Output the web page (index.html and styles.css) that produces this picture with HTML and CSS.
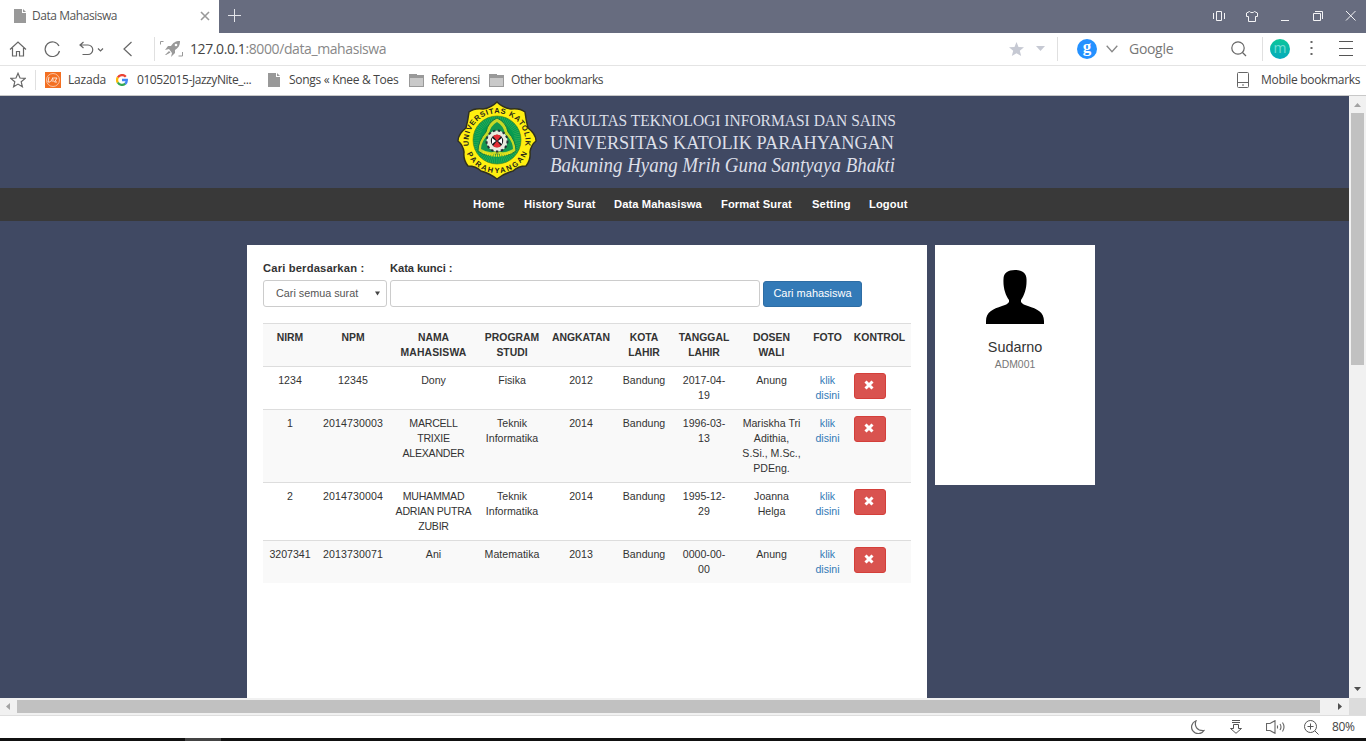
FILE: index.html
```html
<!DOCTYPE html>
<html lang="id">
<head>
<meta charset="utf-8">
<title>Data Mahasiswa</title>
<link rel="stylesheet" href="styles.css">
</head>
<body>
<div class="browser">
  <div class="titlebar">
    <div class="tab">
      <svg width="12" height="14" viewBox="0 0 12 14"><path d="M0 0h8v4h4v10H0z" fill="#999"/><path d="M9 0l3 3H9z" fill="#999"/></svg>
      <span class="tab-title">Data Mahasiswa</span>
      <svg width="10" height="10" viewBox="0 0 10 10"><path d="M1 1l8 8M9 1L1 9" stroke="#999" stroke-width="1.6"/></svg>
    </div>
    <svg class="plus" width="13" height="13" viewBox="0 0 13 13"><path d="M6.5 0v13M0 6.5h13" stroke="#e4e5ea"/></svg>
    <div class="window-buttons">
      <svg width="13" height="12" viewBox="0 0 13 12" fill="none" stroke="#f4f4f6"><path d="M.5 3v6M11.500 3v6M3.500 1.500h5v9h-5z"/></svg>
      <svg width="13" height="12" viewBox="0 0 13 12" fill="none" stroke="#f4f4f6"><path d="M3.500 1.500L.5 3v3.500h2v5h7v-5h2V3L8.500 1.500C7.500 3 4.500 3 3.500 1.500z"/></svg>
      <svg width="13" height="12" viewBox="0 0 13 12"><path d="M2 10.500h8" stroke="#f4f4f6"/></svg>
      <svg width="13" height="12" viewBox="0 0 13 12" fill="none" stroke="#f4f4f6"><path d="M1.500 3.500h7v7h-7zM3 1.500h7.500V9"/></svg>
      <svg width="13" height="12" viewBox="0 0 13 12"><path d="M1 1l9.500 9.500M10.500 1L1 10.500" stroke="#f4f4f6"/></svg>
    </div>
  </div>

  <div class="toolbar">
    <svg width="18" height="16" viewBox="0 0 18 16" fill="none" stroke="#666" stroke-width="1.200"><path d="M1 8.500L9 1l8 7.500M3.500 7v8h4v-4.500h3V15h4V7"/></svg>
    <svg width="17" height="16" viewBox="0 0 17 16" fill="none" stroke="#666" stroke-width="1.200"><path d="M15.500 10A7.300 7.300 0 1 1 15 5"/></svg>
    <svg width="26" height="16" viewBox="0 0 26 16" fill="none" stroke="#666" stroke-width="1.200"><path d="M4.500 1L1 4l3.500 3M1 4h8a4.700 4.700 0 0 1 0 9.500H3.500"/><path d="M19 7.500l2.500 2.500L24 7.500"/></svg>
    <svg width="10" height="16" viewBox="0 0 10 16" fill="none" stroke="#666" stroke-width="1.200"><path d="M8.500 1L1 8l7.500 7"/></svg>
    <i class="divider"></i>
    <svg width="24" height="16" viewBox="0 0 24 16"><path d="M.500 3.500v-3h3M22.500 11v4h-4" fill="none" stroke="#999"/><path d="M20 0c-5 0-7 2-9 5L8 5 5 9l4-1 3 4-1 4 4-4V9c3-2 5-4 5-9zM5 14l4-4 1.500 1.500L6 14z" fill="#999"/><circle cx="16" cy="4" r="1.300" fill="#fff"/></svg>
    <span class="url"><b>127.0.0.1</b>:8000/data_mahasiswa</span>
    <svg width="15" height="14" viewBox="0 0 15 14"><path d="M7.500 0l2 5 5.500.3-4.200 3.500L12.200 14 7.500 11.200 2.800 14l1.400-5.200L0 5.300 5.500 5z" fill="#c6c9d3"/></svg>
    <svg width="9" height="5" viewBox="0 0 9 5"><path d="M0 0h9L4.500 5z" fill="#c6c9d3"/></svg>
    <i class="divider"></i>
    <span class="engine">g</span>
    <svg width="12" height="8" viewBox="0 0 12 8" fill="none" stroke="#888" stroke-width="1.300"><path d="M.700.700L6 6.700 11.300.700"/></svg>
    <span class="search">Google</span>
    <svg width="16" height="16" viewBox="0 0 16 16" fill="none" stroke="#666" stroke-width="1.200"><circle cx="7" cy="7" r="6.200"/><path d="M11.500 11.500L15 15"/></svg>
    <i class="divider"></i>
    <span class="account">m</span>
    <svg width="3" height="15" viewBox="0 0 3 15" fill="#666"><path d="M.500 0h2v2h-2zM.500 6h2v2h-2zM.500 12h2v2h-2z"/></svg>
    <svg width="14" height="16" viewBox="0 0 14 16" stroke="#555"><path d="M0 .500h14M0 7.500h14M0 14.500h14"/></svg>
  </div>

  <div class="bookmarks">
    <svg width="16" height="16" viewBox="0 0 16 16" fill="none" stroke="#666" stroke-width="1.200"><path d="M8 1.300l2 4.700 5.200.4-4 3.400 1.200 5L8 12.100l-4.400 2.700 1.200-5-4-3.400L6 6z"/></svg>
    <i class="divider"></i>
    <svg width="16" height="16" viewBox="0 0 16 16"><path d="M0 0h16v16H0z" fill="#f36f21"/><g fill="none" stroke="#fff" stroke-width=".8"><circle cx="8" cy="8" r="6.500" opacity=".7"/><path d="M4 5L3 10h2M5.500 10L8 5.500V10M9 6h3L9.500 10H12"/></g></svg>
    <span class="loose">Lazada</span>
    <svg width="12" height="12" viewBox="0 0 12 12" fill="none" stroke-width="2.300"><path d="M9.800 2.700A5 5 0 0 0 1.800 3.500" stroke="#ea4335"/><path d="M1.800 3.400a5 5 0 0 0 0 5.200" stroke="#fbbc05"/><path d="M1.800 8.500a5 5 0 0 0 7.500 1.200" stroke="#34a853"/><path d="M9.200 9.800A5 5 0 0 0 10.800 6H6" stroke="#4285f4"/></svg>
    <span class="tight">01052015-JazzyNite_...</span>
    <svg width="12" height="14" viewBox="0 0 12 14"><path d="M0 0h8v4h4v10H0z" fill="#999"/><path d="M9 0l3 3H9z" fill="#999"/></svg>
    <span>Songs « Knee &amp; Toes</span>
    <svg width="15" height="13" viewBox="0 0 15 13"><path d="M0 0h8v1h7v12H0z" fill="#999"/><path d="M1 4h13v8H1z" fill="#c9c9c9"/></svg>
    <span class="tight">Referensi</span>
    <svg width="15" height="13" viewBox="0 0 15 13"><path d="M0 0h8v1h7v12H0z" fill="#999"/><path d="M1 4h13v8H1z" fill="#c9c9c9"/></svg>
    <span class="tight">Other bookmarks</span>
    <svg width="12" height="16" viewBox="0 0 12 16" fill="none" stroke="#666"><rect x=".5" y=".5" width="11" height="15" rx="1"/><path d="M1 10.500h10M5 13h2"/></svg>
    <span>Mobile bookmarks</span>
  </div>

  <div class="viewport">
    <div class="page">
      <header class="banner">
        <svg width="460" height="86" viewBox="0 0 460 86">
          <defs>
            <path id="arc-top" d="M12 47A28.500 28.500 0 1 1 68 47"/>
            <path id="arc-bottom" d="M7 40A33 33 0 0 0 73 40"/>
          </defs>
          <path d="M40 2Q46 8 54 9Q63 8 68 12Q69 20 71 28Q79 34 79 41Q74 45 73 52Q74 60 69 66Q61 66 56 71Q48 73 40 79Q32 73 24 71Q19 66 11 66Q6 60 7 52Q6 45 1 41Q1 34 9 28Q11 20 12 12Q17 8 26 9Q34 8 40 2z" fill="#ffef10" stroke="#30301f" stroke-width="1.500"/>
          <circle cx="40" cy="40" r="24" fill="#069b50" stroke="#4a7a20" stroke-width=".6"/>
          <circle cx="40" cy="40" r="20.500" fill="none" stroke="#38ad58" stroke-width="6" stroke-dasharray=".6 1.200"/>
          <path d="M40 18Q49 22 51 32Q59 41 59 51Q50 58 40 54Q30 58 21 51Q21 41 29 32Q31 22 40 18z" fill="#c5d927" stroke="#14783f"/>
          <path d="M40 22Q47 26 48 34Q56 41 56 49Q48 54 40 51Q32 54 24 49Q24 41 32 34Q33 26 40 22z" fill="#139750"/>
          <path d="M26 52Q40 59 54 52" fill="none" stroke="#f0e516" stroke-width="2.500" stroke-dasharray="1.500 .7"/>
          <circle cx="40" cy="41" r="10.500" fill="#e8eadf" stroke="#25353a" stroke-width="2" stroke-dasharray="2.500 2.500"/>
          <circle cx="40" cy="41" r="6.200" fill="#171b20"/>
          <path d="M36 36q4-3 8 0l-4 5zM36 46q4 3 8 0l-4-5z" fill="#e32c35"/>
          <path d="M35 38l4 3-4 3zM45 38l-4 3 4 3z" fill="#fff"/>
          <text class="seal"><textPath href="#arc-top" startOffset="1" textLength="98" lengthAdjust="spacing">UNIVERSITAS KATOLIK</textPath></text>
          <text class="seal"><textPath href="#arc-bottom" startOffset="14" textLength="76" lengthAdjust="spacing">PARAHYANGAN</textPath></text>
          <text class="caps" x="93" y="25.500" font-size="16.500" textLength="346" lengthAdjust="spacingAndGlyphs">FAKULTAS TEKNOLOGI INFORMASI DAN SAINS</text>
          <text class="caps" x="93" y="49" font-size="19.500" textLength="344" lengthAdjust="spacingAndGlyphs">UNIVERSITAS KATOLIK PARAHYANGAN</text>
          <text class="motto" x="93" y="72" font-size="22" textLength="345" lengthAdjust="spacingAndGlyphs">Bakuning Hyang Mrih Guna Santyaya Bhakti</text>
        </svg>
      </header>
      <nav class="menu"><a>Home</a><a>History Surat</a><a>Data Mahasiswa</a><a>Format Surat</a><a>Setting</a><a>Logout</a></nav>
      <main class="content">
        <section class="panel">
          <div class="filter">
            <label class="first">Cari berdasarkan :</label><label class="second">Kata kunci :</label>
            <div class="select"><span>Cari semua surat</span><svg width="5" height="5" viewBox="0 0 5 5"><path d="M0 .5h5L2.500 4.500z" fill="#444"/></svg></div>
            <div class="field"></div>
            <div class="button">Cari mahasiswa</div>
          </div>
          <table class="students">
            <colgroup><col class="c1"><col class="c2"><col class="c3"><col class="c4"><col class="c5"><col class="c6"><col class="c7"><col class="c8"><col class="c9"><col class="c10"></colgroup>
            <tr><th>NIRM</th><th>NPM</th><th>NAMA<br><span class="wide">MAHASISWA</span></th><th>PROGRAM<br>STUDI</th><th>ANGKATAN</th><th>KOTA<br>LAHIR</th><th>TANGGAL<br>LAHIR</th><th>DOSEN<br>WALI</th><th>FOTO</th><th>KONTROL</th></tr>
            <tr class="short"><td>1234</td><td class="npm">12345</td><td>Dony</td><td>Fisika</td><td>2012</td><td>Bandung</td><td>2017-04-<br>19</td><td>Anung</td><td><a>klik<br>disini</a></td><td class="control"><span class="delete"><svg width="10" height="10" viewBox="0 0 10 10"><path d="M1.500 1.500l7 7M8.500 1.500l-7 7" stroke="#fff" stroke-width="3"/></svg></span></td></tr>
            <tr class="tall"><td>1</td><td class="npm">2014730003</td><td class="upper">MARCELL<br>TRIXIE<br>ALEXANDER</td><td>Teknik<br>Informatika</td><td>2014</td><td>Bandung</td><td>1996-03-<br>13</td><td>Mariskha Tri<br>Adithia,<br>S.Si., M.Sc.,<br>PDEng.</td><td><a>klik<br>disini</a></td><td class="control"><span class="delete"><svg width="10" height="10" viewBox="0 0 10 10"><path d="M1.500 1.500l7 7M8.500 1.500l-7 7" stroke="#fff" stroke-width="3"/></svg></span></td></tr>
            <tr class="medium"><td>2</td><td class="npm">2014730004</td><td class="upper">MUHAMMAD<br>ADRIAN PUTRA<br>ZUBIR</td><td>Teknik<br>Informatika</td><td>2014</td><td>Bandung</td><td>1995-12-<br>29</td><td>Joanna<br>Helga</td><td><a>klik<br>disini</a></td><td class="control"><span class="delete"><svg width="10" height="10" viewBox="0 0 10 10"><path d="M1.500 1.500l7 7M8.500 1.500l-7 7" stroke="#fff" stroke-width="3"/></svg></span></td></tr>
            <tr class="short"><td>3207341</td><td class="npm">2013730071</td><td>Ani</td><td>Matematika</td><td>2013</td><td>Bandung</td><td>0000-00-<br>00</td><td>Anung</td><td><a>klik<br>disini</a></td><td class="control"><span class="delete"><svg width="10" height="10" viewBox="0 0 10 10"><path d="M1.500 1.500l7 7M8.500 1.500l-7 7" stroke="#fff" stroke-width="3"/></svg></span></td></tr>
          </table>
        </section>
        <aside class="profile">
          <svg width="58" height="54" viewBox="0 0 58 54"><path d="M17.500 9C17.500 3 22 0 29 0s11.500 3 11.500 9c.4 9-2 16-5.500 21v2c1 2 4 3 7 4 9 3 16 6 16 15v3H0v-3c0-9 7-12 16-15 3-1 6-2 7-4v-2c-3.500-5-6-12-5.500-21z"/></svg>
          <div class="name">Sudarno</div>
          <div class="id">ADM001</div>
        </aside>
      </main>
    </div>
    <div class="vscroll">
      <svg width="17" height="17" viewBox="0 0 17 17"><path d="M5 11l3.500-4 3.500 4z" fill="#a3a3a3"/></svg>
      <i class="vthumb"></i>
      <svg width="17" height="17" viewBox="0 0 17 17"><path d="M5 6h7l-3.500 4z" fill="#505050"/></svg>
    </div>
  </div>
  <div class="hscroll">
    <svg width="17" height="17" viewBox="0 0 17 17"><path d="M10 5v7L6 8.500z" fill="#a3a3a3"/></svg>
    <i class="hthumb"></i>
    <svg width="17" height="17" viewBox="0 0 17 17"><path d="M6 5v7l4-3.500z" fill="#505050"/></svg>
    <i class="corner"></i>
  </div>
  <div class="status">
    <svg width="14" height="14" viewBox="0 0 14 14" fill="none" stroke="#666" stroke-width="1.200"><path d="M5 .700C3 6 6 11 13 10.500A6.700 6.700 0 1 1 5 .700z"/></svg>
    <svg width="13" height="14" viewBox="0 0 13 14" fill="none" stroke="#555"><path d="M2 .5h8M2 2.500h8M3.500 8.500v-4h5v4H11.500L6 13.300.5 8.500z"/></svg>
    <svg width="19" height="14" viewBox="0 0 19 14" fill="none" stroke="#666" stroke-width="1.100"><path d="M.500 3.500H4L9 .700v12.600L4 10.500H.500zM11.500 5.500v3M14 4q2 3 0 6M16.500 2.500q3 4.500 0 9"/></svg>
    <svg width="15" height="15" viewBox="0 0 15 15" fill="none" stroke="#555"><circle cx="6.500" cy="6.500" r="6"/><path d="M3.500 6.500h6M6.500 3.500v6M11 11l3.500 3.500"/></svg>
    <span>80%</span>
  </div>
  <div class="taskbar"><i></i></div>
</div>
</body>
</html>
```
FILE: styles.css
```css
* { box-sizing: border-box; }
body { margin: 0; overflow: hidden; }
svg { display: block; flex: none; }
.browser { width: 1366px; height: 741px; display: flex; flex-direction: column; background: #fff; font-family: "Open Sans", "Noto Sans", sans-serif; font-size: 12px; color: #444; white-space: nowrap; }
.titlebar { height: 33px; background: #676c7f; display: flex; align-items: center; }
.tab { width: 219px; height: 33px; background: #fff; display: grid; grid-template-columns: 18px 168px 10px; align-items: center; padding-left: 14px; padding-bottom: 1px; }
.tab-title { color: #555; letter-spacing: -.45px; padding-bottom: 1px; }
.plus { margin: 0 0 3px 9px; }
.window-buttons { display: flex; gap: 20px; margin-left: auto; padding: 0 8px 1px 0; }

.toolbar { height: 33px; border-bottom: 1px solid #e4e4e4; display: grid; align-items: center; grid-template-columns: 35px 35px 44px 31px 6px 30px 819px 27px 21px 20px 29px 23px 102px 31px 8px 40px 29px 14px; padding-left: 9px; padding-bottom: 1px; }
.divider { width: 1px; height: 24px; background: #e0e0e0; }
.bookmarks .divider { height: 20px; }
.url { font-size: 14px; color: #888; letter-spacing: -.4px; }
.url b { font-weight: 400; color: #444; }
.engine { width: 20px; height: 20px; border-radius: 50%; background: #2491ff; color: #fff; font: bold 17px/16px "Liberation Serif", serif; text-align: center; }
.account { width: 20px; height: 20px; border-radius: 50%; background: linear-gradient(#0cc69a, #05aabc); color: #74dcd6; font-size: 14px; line-height: 17px; text-align: center; }
.search { font-size: 14px; color: #777; letter-spacing: -.3px; }

.bookmarks { height: 30px; border-bottom: 1px solid #c8c8c8; display: grid; align-items: center; grid-template-columns: 25px 10px 23px 48px 21px 131px 21px 120px 22px 58px 22px 726px 24px 105px; padding-left: 10px; padding-bottom: 1px; }
.bookmarks span { padding-bottom: 1px; letter-spacing: -.3px; }
.bookmarks .loose { letter-spacing: -.2px; }
.bookmarks .tight { letter-spacing: -.43px; }

.viewport { height: 602px; display: flex; }
.page { width: 1349px; background: #404963; overflow: hidden; font-family: "Liberation Sans", Arial, sans-serif; color: #333; }
.banner { height: 92px; padding: 4px 0 0 457px; }
.seal { font: bold 7.5px "Liberation Sans", sans-serif; fill: #27271a; }
.caps { font-family: "Liberation Serif", serif; fill: #dcdfe8; }
.motto { font-family: "Liberation Serif", serif; font-style: italic; fill: #dcdfe8; }
.menu { height: 33px; background: #393939; display: grid; grid-template-columns: 51px 90px 107px 91px 57px 50px; padding-left: 473px; font-size: 11.2px; font-weight: bold; letter-spacing: .1px; line-height: 33px; color: #fff; }
.content { display: flex; align-items: flex-start; gap: 8px; padding: 24px 0 0 247px; }
.panel { width: 680px; height: 500px; background: #fff; padding: 15px 16px; }
.filter { display: grid; grid-template-columns: 124px 370px 99px; column-gap: 3px; grid-template-rows: 20px 27px; font-size: 11.2px; }
.filter label { font-weight: bold; line-height: 17px; }
.filter .first { letter-spacing: .17px; }
.filter .second { grid-column: 2 / 4; letter-spacing: -.08px; }
.select, .field { border: 1px solid #ccc; border-radius: 3px; height: 27px; }
.select { display: flex; align-items: center; justify-content: space-between; padding: 0 6px 1px 12px; color: #555; font-size: 10.8px; }
.button { height: 26px; margin-top: 1px; background: #337ab7; border: 1px solid #2e6da4; border-radius: 3px; color: #fff; font-size: 11px; line-height: 23px; text-align: center; }

.students { width: 648px; margin-top: 16px; table-layout: fixed; border-collapse: separate; border-spacing: 0; font-size: 10.6px; line-height: 15px; text-align: center; }
.students th, .students td { padding: 6px 0 0; border-top: 1px solid #ddd; vertical-align: top; }
.students th { height: 43px; font-size: 10.4px; }
.students .wide { letter-spacing: .15px; }
.students .npm { letter-spacing: .1px; }
.students .upper { letter-spacing: -.25px; }
.students tr:nth-child(odd) { background: #f9f9f9; }
.students a { color: #337ab7; }
.short td { height: 43px; }
.tall td { height: 73px; }
.medium td { height: 58px; }
.c1 { width: 54px; } .c2 { width: 72px; } .c3 { width: 89px; } .c4 { width: 68px; } .c5 { width: 70px; }
.c6 { width: 56px; } .c7 { width: 64px; } .c8 { width: 71px; } .c9 { width: 41px; } .c10 { width: 63px; }
.students .control { padding-left: 6px; }
.delete { display: flex; align-items: center; justify-content: center; width: 32px; height: 26px; background: #d9534f; border: 1px solid #d43f3a; border-radius: 3px; padding: 0 2px 3px 0; }

.profile { width: 160px; height: 240px; background: #fff; display: flex; flex-direction: column; align-items: center; padding-top: 25px; }
.name { margin-top: 14px; font-size: 14.4px; line-height: 18px; }
.id { margin-top: 2px; font-size: 10.4px; line-height: 13px; color: #777; }

.vscroll { width: 17px; background: #f1f1f1; display: flex; flex-direction: column; }
.vthumb { width: 13px; height: 252px; margin: 0 2px auto; background: #c1c1c1; }
.hscroll { height: 18px; background: #f1f1f1; border-bottom: 1px solid #dedede; display: flex; }
.hthumb { width: 1303px; height: 13px; margin: 2px 12px 0 0; background: #c1c1c1; }
.corner { width: 17px; background: #dcdcdc; }
.status { height: 22px; display: grid; align-items: center; grid-template-columns: 39px 36px 38px 28px 30px; padding-left: 1191px; }
.status span { letter-spacing: -.4px; padding-bottom: 1px; }
.taskbar { height: 3px; background: #111; }
.taskbar i { display: block; width: 36px; height: 3px; margin-left: 185px; background: #444; }
```
